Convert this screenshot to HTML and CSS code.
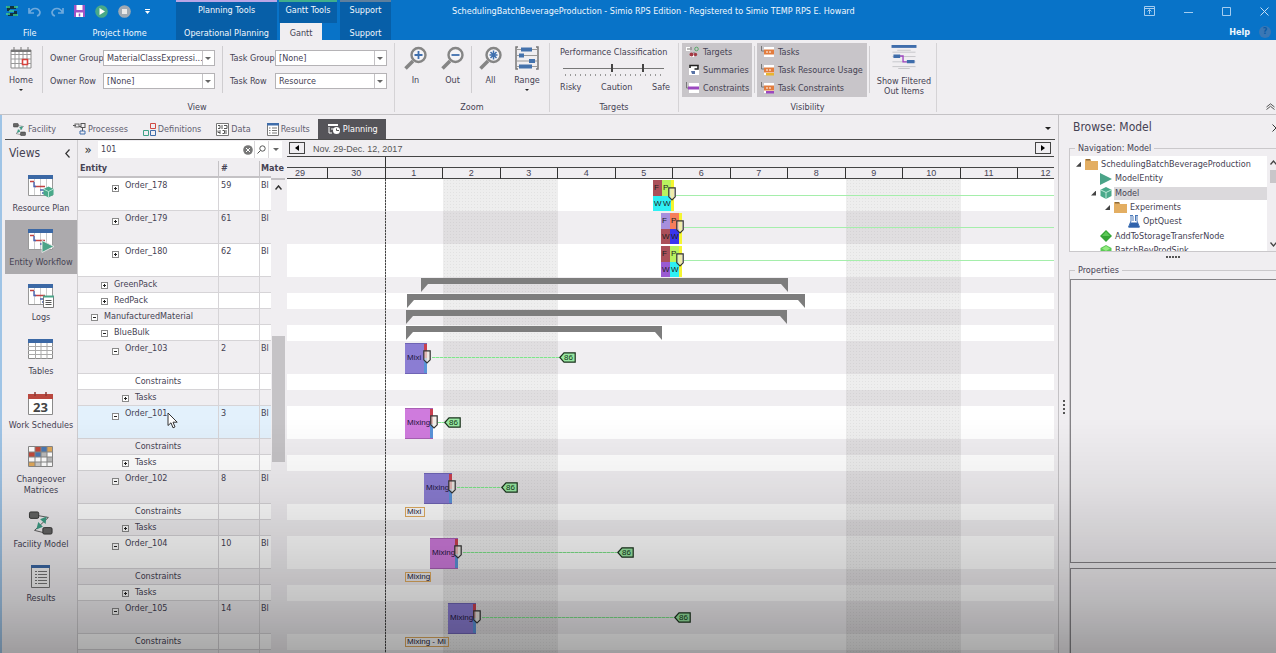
FILE: index.html
```
<!DOCTYPE html>
<html lang="en">
<head>
<meta charset="utf-8">
<title>SchedulingBatchBeverageProduction - Simio RPS Edition</title>
<link rel="stylesheet" href="styles.css">
</head>
<body>
<svg class="defs" width="0" height="0" aria-hidden="true">
  <defs>
    <symbol id="lens" viewBox="0 0 24 24"><path d="M9 15 1.500 22.500" stroke="#858585" stroke-width="3.600"/><circle cx="14.500" cy="9" r="7" fill="#f4f3f6" stroke="#858585" stroke-width="2.400"/></symbol>
    <symbol id="sheet" viewBox="0 0 26 24"><path d="M.5.5h24v20H.5z" fill="#fff" stroke="#999"/><path d="M6.500 4v16M12.500 4v16M18.500 4v16" stroke="#ccc"/><path d="M0 0h25v4H0z" fill="#3b68a5"/><path d="M2 6.500h4M7 11.500h10" stroke="#c24444" stroke-width="1.600"/><path d="M6 7v4.500h2M12 15h4M14 18h3" stroke="#4a63b0" fill="none" stroke-width="1.400"/></symbol>
    <symbol id="cube" viewBox="0 0 12 12"><path d="M6 0 11.500 2.800V9L6 12 .5 9V2.800z" fill="#4aa98a"/><path d="M.5 2.800 6 5.500l5.500-2.700M6 5.500V12" stroke="#c8efdf" fill="none" stroke-width=".9"/></symbol>
    <symbol id="play" viewBox="0 0 12 12"><path d="M0 0 12 6 0 12z" fill="#4ba488"/></symbol>
    <symbol id="folder" viewBox="0 0 13 11"><path d="M0 0h5l1 2h7v9H0z" fill="#e3ae62"/><path d="M1 0h4l1 1.500H1z" fill="#8c6a3a"/></symbol>
    <symbol id="facility" viewBox="0 0 26 26"><path d="M10 5l11 2M21 7 6 21l12 3" stroke="#555" fill="none"/><path d="M19 6l-1 8-6-5zM8 20l2-8 5 5z" fill="#3f9e86"/><rect x=".5" y="1" width="10" height="7" rx="1.500" fill="#666" stroke="#333"/><rect x="15" y="18" width="10" height="7" rx="1.500" fill="#666" stroke="#333"/></symbol>
    <symbol id="shield" viewBox="0 0 8 14"><path d="M.8.8h6.400v9L4 13 .8 9.800z" fill="#eceae0" fill-opacity=".7" stroke="#333" stroke-width="1.200"/></symbol>
    <symbol id="tag" viewBox="0 0 17 11"><path d="M.8 5.500 5 .8h11.200v9.400H5z" fill="#98e8a2" stroke="#1d331f" stroke-width="1.200"/></symbol>
    <symbol id="taskglyph" viewBox="0 0 13 12"><path d="M3 1h10v10H3z" fill="#fff"/><path d="M.5 0v5H3" stroke="#777" fill="none"/><rect x="3" y="3.500" width="10" height="5" fill="#e27c3e"/><path d="M5 6h6" stroke="#fff" stroke-dasharray="2 1"/></symbol>
  </defs>
</svg>

<header class="titlebar">
  <div class="start">
    <div class="qat">
      <svg width="12" height="12" viewBox="0 0 12 12"><path d="M1 1h9v3H4v2h7v5H2V8h6V6H1z" fill="#12313f"/><path d="M0 2h4M8 2h4M0 9h4M7 10h5M3 6h5" stroke="#42d08c" stroke-width="1.500"/></svg>
      <button aria-label="Undo"><svg width="13" height="11" viewBox="0 0 13 11"><path d="M1 2v5h5M1.500 6.500C4 1.500 10 1 12 6c0 2-1 3.500-3 4" stroke="#6ea9dc" fill="none" stroke-width="1.700"/></svg></button>
      <button aria-label="Redo"><svg width="13" height="11" viewBox="0 0 13 11"><path d="M12 2v5H7M11.500 6.500C9 1.500 3 1 1 6c0 2 1 3.500 3 4" stroke="#6ea9dc" fill="none" stroke-width="1.700"/></svg></button>
      <button aria-label="Save"><svg width="11" height="12" viewBox="0 0 11 12"><path d="M0 0h11v12H0z" fill="#a152c4"/><path d="M2.500 0h6v5h-6zM2 7.500h7V12H2z" fill="#fff"/><path d="M5.500 8.500v3" stroke="#a152c4" stroke-width="1.500"/></svg></button>
      <button aria-label="Run"><svg width="13" height="13" viewBox="0 0 13 13"><circle cx="6.500" cy="6.500" r="6.300" fill="#49a988"/><path d="M4.500 3v7l5.500-3.500z" fill="#fff"/></svg></button>
      <button aria-label="Stop"><svg width="13" height="13" viewBox="0 0 13 13"><circle cx="6.500" cy="6.500" r="6.300" fill="#9fa9b3"/><path d="M4 4h5v5H4z" fill="#e9e9e9"/></svg></button>
      <button aria-label="Customize toolbar"><svg width="5" height="5" viewBox="0 0 5 5"><path d="M0 .5h5" stroke="#fff"/><path d="M0 2h5L2.500 5z" fill="#fff"/></svg></button>
    </div>
    <div class="tabs"><a class="file" href="#">File</a><a class="home" href="#">Project Home</a></div>
  </div>
  <div class="context planning"><span>Planning Tools</span><a href="#">Operational Planning</a></div>
  <div class="context gantt-tools"><span>Gantt Tools</span><a class="active" href="#">Gantt</a></div>
  <div class="context support"><span>Support</span><a href="#">Support</a></div>
  <h1>SchedulingBatchBeverageProduction - Simio RPS Edition - Registered to Simio TEMP RPS E. Howard</h1>
  <div class="end">
    <div class="winbuttons">
      <button aria-label="Ribbon display"><svg width="11" height="10" viewBox="0 0 11 10"><path d="M.5.5h10v9H.5zM.5 2.500h10M5.500 8V4M3.500 5.500l2-2 2 2" stroke="#a5cdf0" fill="none"/></svg></button>
      <button aria-label="Minimize"><svg width="9" height="9" viewBox="0 0 9 9"><path d="M0 5.500h9" stroke="#a5cdf0"/></svg></button>
      <button aria-label="Maximize"><svg width="9" height="9" viewBox="0 0 9 9"><path d="M.5.5h8v8h-8z" stroke="#a5cdf0" fill="none"/></svg></button>
      <button aria-label="Close"><svg width="9" height="9" viewBox="0 0 9 9"><path d="M.5.5l8 8M8.500.5l-8 8" stroke="#c5dff5" fill="none"/></svg></button>
    </div>
    <div class="help"><a href="#">Help</a><span class="q">?</span></div>
  </div>
</header>

<section class="ribbon" aria-label="Gantt ribbon">
  <div class="group">
    <div class="content">
      <button class="big homebtn">
        <svg width="22" height="22" viewBox="0 0 22 22"><path d="M1 3h20v18H1z" fill="#fff" stroke="#8b8b8b"/><path d="M1 7.500h20M1 12h20M1 16.500h20M5 3v18M9 3v18M13 3v18M17 3v18" stroke="#999"/><path d="M1 4h20" stroke="#777" stroke-width="2"/><path d="M4 0v4M11 0v4M18 0v4" stroke="#777"/><path d="M12.500 12.500h5v5h-5z" fill="#fff" stroke="#d8423c" stroke-width="1.600"/></svg>
        <span>Home</span><i class="caret"></i>
      </button>
      <div class="sep"></div>
      <div class="fields owner">
        <label for="og">Owner Group</label><span class="combo"><select id="og"><option>MaterialClassExpressi...</option></select></span>
        <label for="or">Owner Row</label><span class="combo"><select id="or"><option>[None]</option></select></span>
      </div>
      <div class="sep"></div>
      <div class="fields task">
        <label for="tg">Task Group</label><span class="combo"><select id="tg"><option>[None]</option></select></span>
        <label for="tr">Task Row</label><span class="combo"><select id="tr"><option>Resource</option></select></span>
      </div>
    </div>
    <div class="caption">View</div>
  </div>
  <div class="group zoom">
    <div class="content">
      <button class="big"><svg width="24" height="24" viewBox="0 0 24 24"><use href="#lens"/><path d="M10.500 9h8M14.500 5v8" stroke="#3f6fae" stroke-width="1.800"/></svg><span>In</span></button>
      <button class="big"><svg width="24" height="24" viewBox="0 0 24 24"><use href="#lens"/><path d="M10.500 9h8" stroke="#3f6fae" stroke-width="1.800"/></svg><span>Out</span></button>
      <div class="sep"></div>
      <button class="big all"><svg width="24" height="24" viewBox="0 0 24 24"><use href="#lens"/><path d="M10.500 9h8M14.500 4.500v9M11.500 6l6 6M17.500 6l-6 6" stroke="#3f6fae" stroke-width="1.500"/></svg><span>All</span></button>
      <button class="big"><svg width="24" height="24" viewBox="0 0 24 24"><path d="M3 1H1v22h2M21 1h2v22h-2" stroke="#777" fill="none" stroke-width="1.500"/><path d="M2 3.500h20M2 9.500h20M2 15h20M2 20.500h20" stroke="#999"/><path d="M6 1.500h11v4H6zM4 7.500h5v4H4zM14 13h6v4h-6zM4 18.500h13v4H4z" fill="#4472ac"/></svg><span>Range</span><i class="caret"></i></button>
    </div>
    <div class="caption">Zoom</div>
  </div>
  <div class="group targets">
    <div class="content">
      <div class="perf">
        <span>Performance Classification</span>
        <div class="slider"><input type="range" aria-label="Caution threshold" min="0" max="100" value="48"><input type="range" aria-label="Safe threshold" min="0" max="100" value="80"></div>
        <div class="scale"><span>Risky</span><span>Caution</span><span>Safe</span></div>
      </div>
    </div>
    <div class="caption">Targets</div>
  </div>
  <div class="group visibility">
    <div class="content">
      <div class="toggles">
        <button><svg width="13" height="12" viewBox="0 0 13 12"><path d="M0 1h4v4H0zM4 7h4v4H4z" fill="#fff"/><circle cx="10.500" cy="3" r="1.800" fill="none" stroke="#58a868"/><path d="M1 3h3M5 1v3M8 6v2" stroke="#777"/><circle cx="5.500" cy="8.500" r="2" fill="#a33b45"/><circle cx="9.500" cy="8.500" r="1.700" fill="#a33b45"/></svg>Targets</button>
        <button><svg width="13" height="12" viewBox="0 0 13 12"><path d="M3 2h10v9H3z" fill="#fff"/><path d="M4 4V1.500h8V5H8.500" stroke="#222" stroke-width="1.600" fill="none"/><path d="M5 7h4v3H6z" fill="#5872a5"/></svg>Summaries</button>
        <button><svg width="13" height="12" viewBox="0 0 13 12"><path d="M3 1h10v10H3z" fill="#fff"/><path d="M.5 0v6H3" stroke="#777" fill="none"/><path d="M2 4.500h11v3H2z" fill="#9b48bf"/></svg>Constraints</button>
      </div>
      <div class="sep"></div>
      <div class="toggles wide">
        <button><svg width="13" height="12"><use href="#taskglyph"/></svg>Tasks</button>
        <button><svg width="13" height="12" viewBox="0 0 13 12"><use href="#taskglyph"/><path d="M5 9h8v2.500H5z" fill="#e8b52f"/></svg>Task Resource Usage</button>
        <button><svg width="13" height="12" viewBox="0 0 13 12"><use href="#taskglyph"/><path d="M5 9h8v2.500H5z" fill="#9b48bf"/></svg>Task Constraints</button>
      </div>
      <div class="sep"></div>
      <button class="big filtered"><svg width="26" height="25" viewBox="0 0 26 25"><path d="M0 0h26v3H0z" fill="#3f6dab"/><path d="M6 5.500h14M1 7.500h24M1 12h24M1 17.500h24M1 22.500h24M7 24.500h12" stroke="#c6c6ca"/><path d="M8 11.500h4v6h4" stroke="#a045c0" fill="none" stroke-width="1.400"/><path d="M2 10h7v3.500H2zM16 15.500h8V19h-8z" fill="#3f6dab"/></svg><span>Show Filtered<br>Out Items</span></button>
    </div>
    <div class="caption">Visibility</div>
  </div>
  <button class="collapse" aria-label="Collapse ribbon"><svg width="9" height="7" viewBox="0 0 9 7"><path d="M.5 4 4.500.8 8.500 4M.5 6.500l4-3.200 4 3.200" stroke="#555" fill="none"/></svg></button>
</section>

<main class="body">
  <div class="work">
    <nav class="doctabs">
      <a class="t1" href="#"><svg width="13" height="13"><use href="#facility"/></svg>Facility</a>
      <a class="t2" href="#"><svg width="13" height="12" viewBox="0 0 13 12"><path d="M0 2.500h3M6 3.500h2M9.500 5v3" stroke="#555" fill="none"/><rect x="2" y="1" width="4" height="3" fill="none" stroke="#666"/><rect x="8" y=".5" width="4" height="4" fill="none" stroke="#555"/><path d="M7 8h5v3H7z" fill="none" stroke="#3f6dab"/></svg>Processes</a>
      <a class="t3" href="#"><svg width="13" height="13" viewBox="0 0 13 13"><path d="M7.500.5h5v5h-5z" fill="none" stroke="#d14a42"/><path d="M.5 7.500h5v5h-5z" fill="none" stroke="#3fa287"/><path d="M7.500 7.500h5v5h-5z" fill="none" stroke="#3f6dab"/></svg>Definitions</a>
      <a class="t4" href="#"><svg width="13" height="13" viewBox="0 0 13 13"><path d="M.5.5h12v12H.5z" fill="#fff" stroke="#777"/><path d="M2 2.500h2v3H2M6 2v4M8 2.500h3v3H8M2 7.500v2h2M4 7v4M6.500 7.500h2v3h-2M10 7v4" stroke="#555" fill="none"/></svg>Data</a>
      <a class="t5" href="#"><svg width="12" height="13" viewBox="0 0 12 13"><path d="M.5.5h11v12H.5z" fill="#fff" stroke="#777"/><path d="M0 0h12v2.500H0z" fill="#3f6dab"/><path d="M2 5h1.500M5 5h5M2 7.500h1.500M5 7.500h5M2 10h1.500M5 10h5" stroke="#777"/></svg>Results</a>
      <a class="t6 active" href="#"><svg width="13" height="12" viewBox="0 0 13 12"><path d="M0 2h10" stroke="#fff" stroke-width="2"/><path d="M1 4v6h3M3 6h3" stroke="#fff" fill="none"/><circle cx="8.500" cy="7.500" r="3.500" fill="#fff"/><path d="M8.500 5.500v2H11" stroke="#555" fill="none"/></svg>Planning</a>
      <i class="caret more"></i>
    </nav>

    <div class="panes">
      <aside class="views">
        <div class="viewhead"><h2>Views</h2><button aria-label="Collapse views"><svg width="5" height="9" viewBox="0 0 5 9"><path d="M4.500.5.8 4.500l3.700 4" stroke="#333" fill="none" stroke-width="1.200"/></svg></button></div>
        <a class="view" href="#"><svg width="26" height="24" viewBox="0 0 26 24"><use href="#sheet"/><use href="#cube" x="15" y="11" width="11" height="12"/></svg>Resource Plan</a>
        <a class="view selected" href="#"><svg width="26" height="24" viewBox="0 0 26 24"><use href="#sheet"/><path d="M14 11.500 26 17.500 14 23.500z" fill="#4ba488" stroke="#e4e4e4"/></svg>Entity Workflow</a>
        <a class="view" href="#"><svg width="26" height="24" viewBox="0 0 26 24"><use href="#sheet"/><path d="M15.500 12.500h10v11h-10z" fill="#fff" stroke="#777"/><path d="M15 12.500h11" stroke="#4ba488" stroke-width="2"/><path d="M17.500 16.500h6M17.500 18.500h6M17.500 20.500h6" stroke="#555"/></svg>Logs</a>
        <a class="view" href="#"><svg width="26" height="24" viewBox="0 0 26 24"><path d="M.5 1.500h24v19H.5z" fill="#fff" stroke="#8a8a8a"/><path d="M7.500 3v18M13 3v18M19 3v18M0 8.500h25M0 12.500h25M0 16.500h25" stroke="#aaa"/><path d="M0 1h25v4H0z" fill="#3b68a5"/></svg>Tables</a>
        <a class="view" href="#"><svg width="26" height="24" viewBox="0 0 26 24"><path d="M.5 2.500h24v20H.5z" fill="#fff" stroke="#8a8a8a"/><path d="M0 2h25v5H0z" fill="#b9473f"/><path d="M7 0v4M18 0v4" stroke="#8a3a35" stroke-width="1.500"/><text x="12.500" y="20" text-anchor="middle" class="daynum">23</text></svg>Work Schedules</a>
        <a class="view tall" href="#"><svg width="26" height="24" viewBox="0 0 26 24"><path d="M.5.5h24v20H.5z" fill="#fff"/><path d="M7 1h6v5H7z" fill="#c24a3c"/><path d="M13 1h6v5h-6zM7 6h6v5H7z" fill="#4a78b4"/><path d="M19 1h6v5h-6zM1 16h6v5H1z" fill="#e0a95c"/><path d="M1 6h6v5H1z" fill="#c24a3c"/><path d="M13 6h6v5h-6zM19 11h6v5h-6z" fill="#bbb"/><path d="M7 16h6v5H7z" fill="#ccc"/><path d="M.5.5h24v20H.5zM7 .5v20M13 .5v20M19 .5v20M.5 6h24M.5 11h24M.5 16h24" fill="none" stroke="#888"/></svg>Changeover<br>Matrices</a>
        <a class="view" href="#"><svg width="26" height="26"><use href="#facility"/></svg>Facility Model</a>
        <a class="view" href="#"><svg width="20" height="24" viewBox="0 0 20 24"><path d="M.5.5h18v22H.5z" fill="#f4f4f4" stroke="#777"/><path d="M0 0h19v3H0z" fill="#3b68a5"/><path d="M4 6.500h2M4 9.500h2M4 12.500h2M4 15.500h2M4 18.500h2M7 6.500h9M7 9.500h9M7 12.500h9M7 15.500h9M7 18.500h9" stroke="#777"/></svg>Results</a>
      </aside>

      <section class="entities">
        <div class="search">
          <button aria-label="Expand filter" class="chev">»</button>
          <input type="text" aria-label="Find" value="101">
          <button class="clear" aria-label="Clear"><svg width="10" height="10" viewBox="0 0 10 10"><circle cx="5" cy="5" r="4.800" fill="#777"/><path d="M3 3l4 4M7 3 3 7" stroke="#fff"/></svg></button>
          <button class="find" aria-label="Search"><svg width="9" height="9" viewBox="0 0 9 9"><circle cx="5.500" cy="3.500" r="2.700" fill="none" stroke="#555"/><path d="M3.500 5.500.5 8.500" stroke="#555"/></svg></button>
          <button class="find" aria-label="Search options"><i class="caret grey"></i></button>
        </div>
        <div class="treewrap">
          <table class="tree">
            <thead><tr><th class="name">Entity</th><th class="num">#</th><th class="mat">Mate</th></tr></thead>
            <tbody>
              <tr class="l"><td class="d3"><button class="x plus" aria-label="Expand"></button>Order_178</td><td>59</td><td>Bl</td></tr>
              <tr class="l"><td class="d3"><button class="x plus" aria-label="Expand"></button>Order_179</td><td>61</td><td>Bl</td></tr>
              <tr class="l"><td class="d3"><button class="x plus" aria-label="Expand"></button>Order_180</td><td>62</td><td>Bl</td></tr>
              <tr><td class="d2"><button class="x plus" aria-label="Expand"></button>GreenPack</td><td></td><td></td></tr>
              <tr><td class="d2"><button class="x plus" aria-label="Expand"></button>RedPack</td><td></td><td></td></tr>
              <tr><td class="d1"><button class="x" aria-label="Collapse"></button>ManufacturedMaterial</td><td></td><td></td></tr>
              <tr><td class="d2"><button class="x" aria-label="Collapse"></button>BlueBulk</td><td></td><td></td></tr>
              <tr class="l"><td class="d3"><button class="x" aria-label="Collapse"></button>Order_103</td><td>2</td><td>Bl</td></tr>
              <tr><td class="d4 leaf">Constraints</td><td></td><td></td></tr>
              <tr><td class="d4"><button class="x plus" aria-label="Expand"></button>Tasks</td><td></td><td></td></tr>
              <tr class="l hot"><td class="d3"><button class="x" aria-label="Collapse"></button>Order_101<svg class="cursor" width="11" height="17" viewBox="0 0 11 17"><path d="M1 1v12.500l3-2.700 2 5 2-.9-2-4.700h4.200z" fill="#fff" stroke="#333"/></svg></td><td>3</td><td>Bl</td></tr>
              <tr><td class="d4 leaf">Constraints</td><td></td><td></td></tr>
              <tr><td class="d4"><button class="x plus" aria-label="Expand"></button>Tasks</td><td></td><td></td></tr>
              <tr class="l"><td class="d3"><button class="x" aria-label="Collapse"></button>Order_102</td><td>8</td><td>Bl</td></tr>
              <tr><td class="d4 leaf">Constraints</td><td></td><td></td></tr>
              <tr><td class="d4"><button class="x plus" aria-label="Expand"></button>Tasks</td><td></td><td></td></tr>
              <tr class="l"><td class="d3"><button class="x" aria-label="Collapse"></button>Order_104</td><td>10</td><td>Bl</td></tr>
              <tr><td class="d4 leaf">Constraints</td><td></td><td></td></tr>
              <tr><td class="d4"><button class="x plus" aria-label="Expand"></button>Tasks</td><td></td><td></td></tr>
              <tr class="l"><td class="d3"><button class="x" aria-label="Collapse"></button>Order_105</td><td>14</td><td>Bl</td></tr>
              <tr><td class="d4 leaf">Constraints</td><td></td><td></td></tr>
              <tr><td class="d4"><button class="x plus" aria-label="Expand"></button>Tasks</td><td></td><td></td></tr>
            </tbody>
          </table>
          <div class="scroll"><svg width="7" height="5" viewBox="0 0 7 5"><path d="M.5 4.500l3-3.500 3 3.500" stroke="#333" fill="none" stroke-width="1.500"/></svg><i class="thumb"></i></div>
        </div>
      </section>

      <section class="gantt">
        <div class="range"><button aria-label="Earlier"><svg width="4" height="6" viewBox="0 0 4 6"><path d="M4 0v6L0 3z"/></svg></button><span>Nov. 29-Dec. 12, 2017</span><button class="next" aria-label="Later"><svg width="4" height="6" viewBox="0 0 4 6"><path d="M0 0v6l4-3z"/></svg></button></div>
        <div class="months"><i></i></div>
        <div class="days"><span class="first">29</span><span>30</span><span>1</span><span>2</span><span>3</span><span>4</span><span>5</span><span>6</span><span>7</span><span>8</span><span>9</span><span>10</span><span>11</span><span class="last">12</span></div>
        <div class="chart">
          <div class="row l"><b class="line far" style="--s:389;--e:767"></b><b class="quad" style="--s:366;--e:387"><i class="brown">F</i><i class="lime">P</i><i class="cyan">W</i><i class="cyan">W</i></b><svg class="shield" style="--s:381"><use href="#shield"/></svg></div>
          <div class="row l"><b class="line far" style="--s:397;--e:767"></b><b class="quad" style="--s:374;--e:395"><i class="lilac">F</i><i class="coral">P</i><i class="brown">W</i><i class="blue">W</i></b><svg class="shield" style="--s:389"><use href="#shield"/></svg></div>
          <div class="row l"><b class="line far" style="--s:397;--e:767"></b><b class="quad" style="--s:374;--e:395"><i class="brown">F</i><i class="lime">P</i><i class="violet">W</i><i class="cyan">W</i></b><svg class="shield" style="--s:389"><use href="#shield"/></svg></div>
          <div class="row"><b class="sum" style="--s:134;--e:501"></b></div>
          <div class="row"><b class="sum" style="--s:120;--e:518"></b></div>
          <div class="row"><b class="sum" style="--s:119;--e:500"></b></div>
          <div class="row"><b class="sum" style="--s:119;--e:375"></b></div>
          <div class="row l"><b class="line" style="--s:145;--e:272"></b><b class="mix" style="--s:118;--e:140">Mixi</b><svg class="shield" style="--s:136"><use href="#shield"/></svg><span class="due" style="--s:272"><svg width="17" height="11"><use href="#tag"/></svg>86</span></div>
          <div class="row"></div><div class="row"></div>
          <div class="row l"><b class="line" style="--s:151;--e:157"></b><b class="mix pink" style="--s:118;--e:146">Mixing</b><svg class="shield" style="--s:143"><use href="#shield"/></svg><span class="due" style="--s:157"><svg width="17" height="11"><use href="#tag"/></svg>86</span></div>
          <div class="row"></div><div class="row"></div>
          <div class="row l"><b class="line" style="--s:170;--e:214"></b><b class="mix" style="--s:137;--e:165">Mixing</b><svg class="shield" style="--s:161"><use href="#shield"/></svg><span class="due" style="--s:214"><svg width="17" height="11"><use href="#tag"/></svg>86</span></div>
          <div class="row"><b class="wait" style="--s:118;--e:138">Mixi</b></div><div class="row"></div>
          <div class="row l"><b class="line" style="--s:176;--e:330"></b><b class="mix pink" style="--s:143;--e:171">Mixing</b><svg class="shield" style="--s:167"><use href="#shield"/></svg><span class="due" style="--s:330"><svg width="17" height="11"><use href="#tag"/></svg>86</span></div>
          <div class="row"><b class="wait" style="--s:118;--e:144">Mixing</b></div><div class="row"></div>
          <div class="row l"><b class="line" style="--s:195;--e:387"></b><b class="mix" style="--s:161;--e:189">Mixing</b><svg class="shield" style="--s:186"><use href="#shield"/></svg><span class="due" style="--s:387"><svg width="17" height="11"><use href="#tag"/></svg>86</span></div>
          <div class="row"><b class="wait" style="--s:118;--e:162">Mixing - Mi</b></div><div class="row"></div>
          <i class="weekend" style="--s:156;--e:271"></i><i class="weekend" style="--s:559;--e:674"></i><i class="now" style="--s:98"></i>
        </div>
      </section>
    </div>
  </div>

  <div class="splitter"><i></i><i></i><i></i><i></i></div>

  <aside class="browse">
    <div class="browsehead"><h2>Browse: Model</h2><button aria-label="Close panel"><svg width="8" height="8" viewBox="0 0 8 8"><path d="M.5.5l7 7M7.500.5l-7 7" stroke="#333"/></svg></button></div>
    <fieldset class="nav">
      <legend>Navigation: Model</legend>
      <div class="navtree">
        <ul>
          <li class="n0"><i class="open"></i><svg width="13" height="11"><use href="#folder"/></svg><span>SchedulingBatchBeverageProduction</span></li>
          <li class="n1"><i></i><svg width="12" height="12"><use href="#play"/></svg><span>ModelEntity</span></li>
          <li class="n1 picked"><i class="open"></i><svg width="12" height="12"><use href="#cube"/></svg><span>Model</span></li>
          <li class="n2"><i class="open"></i><svg width="13" height="11"><use href="#folder"/></svg><span>Experiments</span></li>
          <li class="n3"><i></i><svg width="12" height="13" viewBox="0 0 12 13"><path d="M2 .5h3M7 .5h3M3 1v5L.5 12h11L9 6V1M5 1v5M7.500 1v5" stroke="#4a78b8" fill="none"/><path d="M2.500 7.500h7l2 5H.5z" fill="#2f62ab"/></svg><span>OptQuest</span></li>
          <li class="n1"><i></i><svg width="12" height="12" viewBox="0 0 12 12"><path d="M6 0l6 6-6 6-6-6z" fill="#35a535"/><path d="M6 1.500 10 6H2z" fill="#5cc957"/></svg><span>AddToStorageTransferNode</span></li>
          <li class="n1"><i></i><svg width="12" height="12" viewBox="0 0 12 12"><path d="M6 0l5.500 3v6L6 12 .5 9V3z" fill="#5cc957"/><path d="M6 1l4 2.500L6 6 2 3.500z" fill="#93ea7e"/></svg><span>BatchBevProdSink</span></li>
        </ul>
        <div class="navscroll"><svg width="7" height="5" viewBox="0 0 7 5"><path d="M.5 4.500l3-3.500 3 3.500" stroke="#444" fill="none" stroke-width="1.300"/></svg><i></i><svg class="down" width="7" height="5" viewBox="0 0 7 5"><path d="M.5.5l3 3.500 3-3.500" stroke="#444" fill="none" stroke-width="1.300"/></svg></div>
      </div>
    </fieldset>
    <div class="grip"><i></i><i></i><i></i><i></i><i></i></div>
    <fieldset class="props">
      <legend>Properties</legend>
      <div class="box grid"></div>
      <div class="box hint"></div>
    </fieldset>
  </aside>
</main>
<div class="shade" aria-hidden="true"></div>
</body>
</html>
```
FILE: styles.css
```
:root {
  --blue: #0873c8;
  --blue-dark: #075fa8;
  --panel: #f0eef1;
  --ink: #454253;
  --edge: #c4c2c5;
}
* { box-sizing: border-box; }
body {
  margin: 0;
  height: 100vh;
  display: flex;
  flex-direction: column;
  overflow: hidden;
  background: var(--panel);
  color: var(--ink);
  font: 9px/11px "DejaVu Sans Condensed", "DejaVu Sans", sans-serif;
}
button { font: inherit; color: inherit; background: none; border: 0; padding: 0; }
a { color: inherit; text-decoration: none; }
h1, h2 { margin: 0; font-weight: normal; }
svg { display: block; flex: none; }
.defs { position: absolute; }
.caret { width: 0; height: 0; border: 3px solid transparent; border-top-color: #222; border-bottom: 0; }
.caret.grey { border-top-color: #666; }

/* title bar */
.titlebar { display: flex; height: 40px; background: var(--blue); color: #f0f7fd; flex: none; }
.start { width: 176px; }
.qat { display: flex; align-items: center; height: 22px; padding-left: 6px; gap: 10px; }
.qat button:last-child { margin-left: 4px; }
.tabs { display: flex; line-height: 22px; }
.tabs .file { padding-left: 23px; }
.tabs .home { padding-left: 56px; }
.context { display: flex; flex-direction: column; text-align: center; background: var(--blue-dark); border-top: 2px solid #b9a5e6; }
.context span { height: 21px; line-height: 17px; }
.context a { height: 17px; line-height: 20px; }
.planning { width: 101px; margin-right: 2px; }
.gantt-tools { width: 58px; margin-right: 3px; border-top-color: #3fae8d; background: linear-gradient(var(--blue-dark) 21px, var(--blue) 21px); }
.gantt-tools .active { width: 42px; margin-left: 1px; background: var(--panel); color: var(--ink); }
.support { width: 51px; border-top-color: #5f7f9d; }
.titlebar h1 { flex: 1; padding-left: 61px; font-size: 9px; line-height: 22px; white-space: nowrap; }
.winbuttons { display: flex; justify-content: space-between; align-items: center; width: 132px; height: 22px; padding-right: 7px; }
.help { display: flex; justify-content: flex-end; align-items: center; gap: 9px; height: 20px; padding-right: 5px; font-weight: bold; }
.q { width: 12px; height: 12px; border-radius: 6px; background: #3a77b5; color: #0a5ba5; text-align: center; }

/* ribbon */
.ribbon { display: flex; height: 75px; padding: 3px 0 2px; border-bottom: 1px solid var(--edge); flex: none; }
.group { display: flex; flex-direction: column; justify-content: space-between; border-right: 1px solid #d5d3d6; }
.content { display: flex; }
.caption { text-align: center; line-height: 10px; }
.sep { width: 1px; height: 47px; margin-top: 3px; background: #cfcdd0; }
.big { display: flex; flex-direction: column; align-items: center; width: 36px; padding-top: 3px; }
.big svg { height: 24px; }
.big span { margin-top: 5px; }
.big .caret { margin-top: 3px; border-width: 2px 2px 0; }
.homebtn { width: 42px; }
.fields { display: grid; grid-template-columns: auto 112px; row-gap: 7px; align-items: center; align-content: start; padding: 7px 7px 0 7px; }
.owner label { width: 53px; white-space: nowrap; }
.task label { width: 45px; white-space: nowrap; }
.combo { position: relative; height: 16px; border: 1px solid #b5b3b6; background: #fff; overflow: hidden; }
.combo select { width: 100%; height: 14px; padding: 0 9px 0 3px; border: 0; appearance: none; background: none; font: inherit; color: inherit; }
.combo::before { content: ""; position: absolute; right: 11px; top: 0; height: 14px; border-left: 1px solid #c4c2c5; }
.combo::after { content: ""; position: absolute; right: 3px; top: 6px; border: 3px solid transparent; border-top-color: #666; border-bottom: 0; }
.zoom .content { padding-left: 2px; }
.zoom .big { width: 37px; }
.zoom .content .big:last-child { width: 36px; margin-right: 4px; }
.perf { width: 128px; padding: 4px 10px 0; display: flex; flex-direction: column; white-space: nowrap; }
.slider { display: grid; height: 20px; margin: 2px 0 0 3px; background:
  linear-gradient(#777, #777) 0 8px / 101px 1px no-repeat,
  repeating-linear-gradient(90deg, #999 0 1px, transparent 1px 5px) 2px 14px / 98px 2px no-repeat; }
.slider input { grid-area: 1 / 1; width: 101px; height: 16px; margin: 0; appearance: none; background: none; pointer-events: none; }
.slider input::-webkit-slider-thumb { appearance: none; width: 2px; height: 8px; background: #444; pointer-events: auto; }
.scale { display: flex; justify-content: space-between; margin: 2px -2px 0 0; }
.visibility .content { padding-left: 3px; gap: 2px; }
.toggles { width: 70px; height: 54px; padding: 0 4px; display: grid; grid-template-rows: repeat(3, 1fr); background: #c8c5c9; }
.toggles.wide { width: 110px; }
.toggles button { display: flex; align-items: center; gap: 4px; white-space: nowrap; }
.filtered { width: 64px; padding-top: 2px; line-height: 10px; }
.filtered span { margin-top: 7px; }
.collapse { margin-left: auto; align-self: flex-end; padding: 0 1px 2px 0; }

/* main area */
.body { display: flex; flex: 1; min-height: 0; border-left: 2px solid #9fc4e6; }
.work { flex: 1; min-width: 0; display: flex; flex-direction: column; padding-left: 3px; }
.doctabs { display: flex; height: 25px; align-items: flex-end; padding-left: 6px; border-bottom: 1px solid #4b4b4b; flex: none; color: #626070; }
.doctabs a { display: flex; align-items: center; gap: 2px; height: 20px; padding: 0 2px; }
.doctabs .t2 { margin-left: 13px; }
.doctabs .t3 { margin-left: 11px; }
.doctabs .t4 { margin-left: 11px; }
.doctabs .t5 { margin-left: 12px; }
.doctabs .active { margin-left: 6px; padding: 0 8px 0 10px; background: #555459; color: #fff; }
.more { margin: 0 4px 9px auto; }
.panes { display: flex; flex: 1; min-height: 0; }

.views { width: 73px; border-right: 1px solid #cfcdd0; flex: none; }
.viewhead { display: flex; justify-content: space-between; align-items: center; height: 26px; padding: 0 7px 0 4px; }
h2 { font-size: 12px; }
.view { display: flex; flex-direction: column; align-items: center; height: 54px; padding-top: 9px; gap: 4px; text-align: center; line-height: 11px; white-space: nowrap; }
.view svg { height: 24px; }
.view.tall { height: 65px; }
.view.selected { margin-bottom: 1px; background: #acaaad; }
.daynum { font: bold 13px "Open Sans", sans-serif; fill: #444; }

.entities { width: 207px; display: flex; flex-direction: column; flex: none; }
.search { display: flex; height: 17px; margin: 1px 3px 3px 0; }
.chev { width: 20px; font-size: 13px; color: #333; }
.search input { flex: 1; min-width: 0; border: 0; background: #fff; font: inherit; color: inherit; padding: 0 3px; }
.search .clear, .search .find { background: #fff; width: 13px; display: flex; align-items: center; justify-content: center; }
.search .find { width: 14px; border-left: 1px solid #d8d6d9; }
.treewrap { display: flex; flex: 1; min-height: 0; overflow: hidden; }
.tree { position: relative; z-index: 1; width: 193px; height: max-content; table-layout: fixed; border-collapse: separate; border-spacing: 0; background: #fff; flex: none; }
.tree th { height: 17px; padding: 0 2px; text-align: left; line-height: 15px; background: var(--panel); border-bottom: 2px solid #c4c2c5; border-left: 1px solid #c4c2c5; }
.tree .name { width: 140px; border-left: 0; }
.tree .num { width: 41px; }
.tree .mat { width: 12px; padding: 0 1px; white-space: nowrap; }
.tree td { height: 16px; padding: 0 2px; line-height: 14px; vertical-align: top; border-bottom: 1px solid #d6d4d7; border-left: 1px solid #d6d4d7; overflow: hidden; white-space: nowrap; }
.tree td:last-child { padding: 0 0 0 1px; }
.tree td:first-child { border-left: 0; }
.tree tr.l td { height: 33px; }
.tree tbody tr:nth-child(even) { background: var(--panel); }
.tree tbody tr.hot { background: #e3f1fc; }
.tree .d1 { padding-left: 12px; }
.tree .d2 { padding-left: 22px; }
.tree .d3 { padding-left: 33px; position: relative; overflow: visible; }
.tree .d4 { padding-left: 43px; }
.tree .leaf { padding-left: 57px; }
.x { width: 7px; height: 7px; margin: 5px 6px 0 1px; border: 1px solid #8a8a8a; vertical-align: top;
  background: linear-gradient(#222, #222) center / 3px 1px no-repeat #fff; }
.x.plus { background: linear-gradient(#222, #222) center / 3px 1px no-repeat, linear-gradient(#222, #222) center / 1px 3px no-repeat, #fff; }
.l .x { margin-top: 7px; }
.cursor { position: absolute; left: 89px; top: 6px; z-index: 2; }
.scroll { width: 14px; display: flex; flex-direction: column; align-items: center; }
.scroll::before { content: ""; width: 14px; height: 17px; margin-bottom: 5px; border-bottom: 2px solid #c4c2c5; }
.thumb { width: 13px; height: 126px; margin-top: 146px; background: #c5c3c6; }

/* gantt */
.gantt { flex: 1; min-width: 0; margin-left: 2px; margin-right: 1px; display: flex; flex-direction: column; font-family: "Liberation Sans", Arial, sans-serif; }
.range { display: flex; align-items: center; gap: 8px; height: 17px; padding: 0 3px 0 2px; border-bottom: 1px solid #444; color: #555; flex: none; }
.range span { font-size: 9px; line-height: 17px; padding-top: 3px; }
.range button { width: 16px; height: 12px; border: 1px solid #444; display: flex; align-items: center; justify-content: center; }
.range .next { margin-left: auto; }
.months { height: 11px; border-bottom: 1px solid #444; padding-left: calc(98 / 767 * 100%); flex: none; }
.months i { display: block; width: 1px; height: 10px; background: #333; }
.days { display: grid; grid-template-columns: 82fr repeat(12, 115fr) 72fr; height: 11px; line-height: 11px; text-align: center; border-bottom: 1px solid #444; flex: none; }
.days span { border-right: 1px solid #333; min-width: 0; }
.days .first { padding-right: 14px; }
.days .last { padding-left: 19px; border-right: 0; }
.chart { position: relative; flex: 1; min-height: 0; overflow: hidden; }
.row { position: relative; height: 16px; background: #fff; }
.row.l { height: 33px; }
.row:first-child { height: 32px; }
.row:nth-child(even) { background: var(--panel); }
.row > *, .weekend, .now { position: absolute; z-index: 1; left: calc(var(--s) / 767 * 100%); }
.row > b, .weekend { width: calc((var(--e) - var(--s)) / 767 * 100%); }
.weekend { top: 0; bottom: 0; z-index: 0; background: radial-gradient(circle, rgba(0, 0, 0, .05) 0 1px, transparent 1px) 0 0 / 3px 3px, rgba(0, 0, 0, .065); }
.now { top: 0; bottom: 0; width: 1px; background: repeating-linear-gradient(#444 0 2px, #bbb 2px 3px); }
.line { top: 16px; height: 1px; background: repeating-linear-gradient(90deg, #7fe38b 0 3px, #b5f0bb 3px 4px); }
.line.far { background: #a5eeab; }
.quad { top: 2px; height: 31px; display: grid; grid-template-columns: 1fr 1fr; padding-right: 3px; background: #f4f531; font-weight: normal; color: #222; }
.row:first-child > .quad, .row:first-child > .shield { margin-top: -1px; }
.quad i { font-style: normal; font-size: 8px; line-height: 15px; padding-left: 1px; min-width: 0; }
.brown { background: #ab5059; } .lime { background: #b9f35f; } .cyan { background: #2ef0f4; }
.lilac { background: #a78fdd; } .coral { background: #f67e5c; } .blue { background: #3935ee; } .violet { background: #9a5ad2; }
.shield { top: 9px; width: 8px; height: 14px; }
.sum { top: 1px; height: 14px; background: #7d7d7d; clip-path: polygon(0 0, 100% 0, 100% 100%, calc(100% - 7px) 6px, 7px 6px, 0 100%); }
.mix { top: 2px; height: 31px; padding-left: 2px; line-height: 28px; font-size: 8px; font-weight: normal; color: #1d1540; overflow: hidden; white-space: nowrap;
  border: solid #6f64b5; border-width: 1px 0 1px 0;
  background: linear-gradient(#c9404f 50%, #5a93d8 50%) right / 3px 100% no-repeat, #8b7dd3; }
.mix.pink { border-color: #a95fb5; background-color: #cf7bdd; }
.due { top: 11px; width: 17px; height: 11px; padding-left: 5px; font-size: 8px; line-height: 11px; color: #123817; }
.due svg { position: absolute; left: 0; top: 0; z-index: -1; }
.wait { top: 3px; height: 10px; padding-left: 1px; border: 1px solid #e3ae62; font-size: 8px; line-height: 8px; font-weight: normal; color: #1b1b3a; white-space: nowrap; overflow: hidden; }

/* right side */
.splitter { width: 11px; border-left: 1px solid var(--edge); margin-left: 3px; flex: none; display: flex; flex-direction: column; align-items: center; justify-content: center; gap: 2px; padding: 46px 1px 0 0; }
.splitter i, .grip i { width: 2px; height: 2px; background: #555; }
.browse { width: 207px; display: flex; flex-direction: column; flex: none; overflow: hidden; }
.browsehead { display: flex; justify-content: space-between; align-items: center; height: 25px; padding-left: 4px; margin-right: -4px; }
fieldset { margin: 0 -3px 0 0; padding: 0; border: 1px solid #cac8cb; min-width: 0; }
legend { margin-left: 5px; padding: 0 3px; line-height: 14px; }
.nav { margin-top: 1px; }
.navtree { display: flex; height: 95px; margin-top: 1px; background: #fff; overflow: hidden; }
.navtree ul { flex: 1; height: 102px; margin: 0; padding: 1px 0 0; list-style: none; display: grid; grid-auto-rows: 1fr; }
.navtree li { display: flex; align-items: center; gap: 2px; min-width: 0; white-space: nowrap; }
.navtree li > i { width: 5px; height: 5px; margin-right: 2px; }
.navtree .open { background: #444; clip-path: polygon(100% 0, 100% 100%, 0 100%); }
.navtree li svg { max-height: 13px; }
.navtree li span { flex: 1; padding: 1px 1px; }
.n0 { padding-left: 6px; } .n1 { padding-left: 21px; } .n2 { padding-left: 35px; } .n3 { padding-left: 49px; }
.picked span { background: #dbd9dc; }
.navscroll { width: 11px; padding: 4px 0 4px 3px; background: var(--panel); display: flex; flex-direction: column; }
.navscroll i { width: 9px; height: 13px; margin-top: 5px; background: #c8c6c9; }
.navscroll .down { margin-top: auto; }
.grip { display: flex; justify-content: center; gap: 1px; padding: 4px 0 5px; }
.props { flex: 1; display: flex; flex-direction: column; border-bottom: 0; }
.box { border: 1px solid #858387; }
.grid { flex: 285; margin: 2px 0 5px; }
.hint { flex: 85; border-bottom: 0; }

.shade { position: fixed; left: 0; right: 0; bottom: 0; height: 235px; z-index: 5; pointer-events: none;
  background: linear-gradient(rgba(0, 0, 0, 0), rgba(0, 0, 0, .05) 25%, rgba(0, 0, 0, .15) 55%, rgba(0, 0, 0, .23) 78%, rgba(0, 0, 0, .34)); }
```
